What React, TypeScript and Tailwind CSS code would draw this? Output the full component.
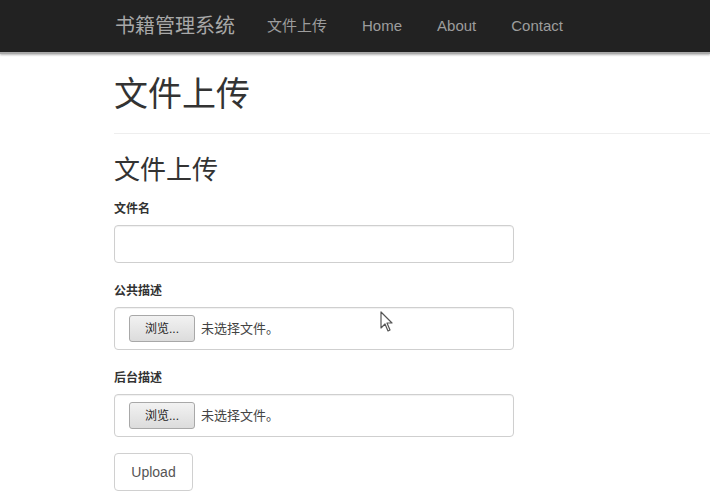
const cjk = '"Liberation Sans", "Noto Sans CJK SC", Arial, sans-serif'

function FileField() {
  return (
    <div className="mt-2 flex h-[43px] w-[400px] items-center rounded-[4px] border border-[#cfcfcf] bg-white pl-[14px] shadow-[inset_0_1px_1px_rgba(0,0,0,0.06)]">
      <button
        type="button"
        className="flex h-[27px] w-[66px] items-center justify-center rounded-[3px] border border-[#a8a8a8] bg-gradient-to-b from-[#f2f2f2] to-[#dcdcdc] text-[12px] text-[#222]"
      >
        浏览...
      </button>
      <span className="ml-[6px] text-[13px] text-[#444]">未选择文件。</span>
    </div>
  )
}

export default function App() {
  return (
    <div className="relative min-h-[500px] bg-white text-[#333]" style={{ fontFamily: cjk }}>
      <nav className="flex h-[54px] items-center border-b-[2px] border-[#a9a9a9] bg-[#222] pl-[115px] shadow-[0_1px_2px_rgba(0,0,0,0.3)]">
        <span className="text-[20px] text-[#a8a8a8]">书籍管理系统</span>
        <div className="ml-[32px] flex items-center gap-[34px] text-[15px] text-[#9d9d9d]">
          <span>文件上传</span>
          <span className="ml-[1px]">Home</span>
          <span className="ml-[1px]">About</span>
          <span className="ml-[1px]">Contact</span>
        </div>
      </nav>

      <div className="pl-[114px]">
        <h1 className="mt-[20px] text-[34px] leading-[40px] text-[#333]">文件上传</h1>
        <div className="mt-[19px] border-t border-[#eeeeee]" />
        <h2 className="mt-[20px] text-[26px] leading-[32px] text-[#333]">文件上传</h2>

        <label className="mt-[15px] block text-[12px] font-bold leading-[16px]">文件名</label>
        <input
          type="text"
          className="mt-2 block h-[38px] w-[400px] rounded-[4px] border border-[#cfcfcf] bg-white shadow-[inset_0_1px_1px_rgba(0,0,0,0.06)] outline-none"
        />

        <label className="mt-[20px] block text-[12px] font-bold leading-[16px]">公共描述</label>
        <FileField />

        <label className="mt-[20px] block text-[12px] font-bold leading-[16px]">后台描述</label>
        <FileField />

        <button
          type="button"
          className="mt-[16px] flex h-[38px] w-[79px] items-center justify-center rounded-[4px] border border-[#d0d0d0] bg-white text-[14px] text-[#555]"
        >
          Upload
        </button>
      </div>

      <svg className="absolute left-[380px] top-[311px]" width="14" height="22" viewBox="0 0 14 22">
        <path d="M1 1 L1 17 L5 13 L8 20 L10 19 L7 12 L12 12 Z" fill="#fff" stroke="#555" strokeWidth="1.2" strokeLinejoin="round" />
      </svg>
    </div>
  )
}
